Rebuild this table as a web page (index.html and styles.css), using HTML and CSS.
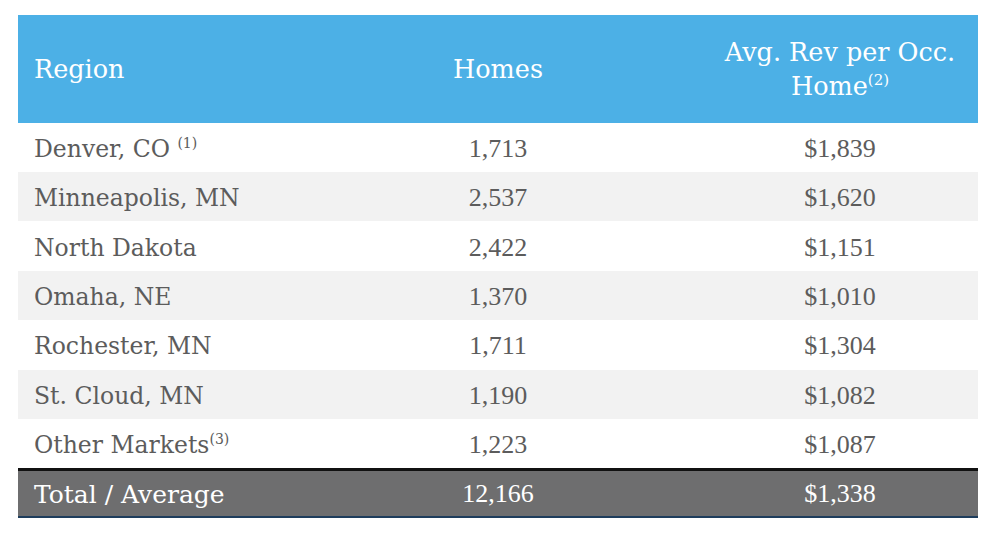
FILE: index.html
```html
<!DOCTYPE html>
<html>
<head>
<meta charset="utf-8">
<link rel="stylesheet" href="styles.css">
</head>
<body>
<div class="tbl">
  <div class="row head">
    <div class="c">Region</div>
    <div class="c ctr">Homes</div>
    <div class="c ctr">Avg. Rev per Occ.<br>Home<sup>(2)</sup></div>
  </div>
  <div class="row">
    <div class="c">Denver, CO <sup>(1)</sup></div>
    <div class="c num">1,713</div>
    <div class="c num">$1,839</div>
  </div>
  <div class="row alt">
    <div class="c">Minneapolis, MN</div>
    <div class="c num">2,537</div>
    <div class="c num">$1,620</div>
  </div>
  <div class="row">
    <div class="c">North Dakota</div>
    <div class="c num">2,422</div>
    <div class="c num">$1,151</div>
  </div>
  <div class="row alt">
    <div class="c">Omaha, NE</div>
    <div class="c num">1,370</div>
    <div class="c num">$1,010</div>
  </div>
  <div class="row">
    <div class="c">Rochester, MN</div>
    <div class="c num">1,711</div>
    <div class="c num">$1,304</div>
  </div>
  <div class="row alt">
    <div class="c">St. Cloud, MN</div>
    <div class="c num">1,190</div>
    <div class="c num">$1,082</div>
  </div>
  <div class="row">
    <div class="c">Other Markets<sup>(3)</sup></div>
    <div class="c num">1,223</div>
    <div class="c num">$1,087</div>
  </div>
  <div class="row total">
    <div class="c">Total / Average</div>
    <div class="c num">12,166</div>
    <div class="c num">$1,338</div>
  </div>
</div>
</body>
</html>
```

FILE: styles.css
```css
html, body {
  margin: 0;
  padding: 0;
  background: #ffffff;
}

.tbl {
  width: 960px;
  margin: 15px 0 0 18px;
  font-family: "DejaVu Serif", "Liberation Serif", serif;
  font-size: 23.5px;
}

.row {
  display: grid;
  grid-template-columns: 276px 408px 276px;
  align-items: center;
  height: 49.4px;
  color: #5c5c5c;
  box-sizing: border-box;
}

.c {
  padding: 3px 16px 0;
  white-space: nowrap;
}

.ctr {
  text-align: center;
}

.num {
  text-align: center;
  font-family: "Liberation Serif", "DejaVu Serif", serif;
  font-size: 26px;
}

.head {
  height: 107.7px;
  background: #4cb0e6;
  color: #ffffff;
  font-size: 25.5px;
  line-height: 34px;
}

.head .c {
  padding-top: 0;
}

.alt {
  background: #f2f2f2;
}

.total {
  background: #6e6e6f;
  color: #ffffff;
  font-size: 25px;
  border-top: 3px solid #111111;
  border-bottom: 2px solid #1e3d5c;
}

.total .c {
  padding-top: 1px;
}

.total .num {
  font-size: 26px;
}

sup {
  font-size: 14px;
  line-height: 0;
  vertical-align: 9px;
}

.head sup {
  font-size: 15px;
  vertical-align: 10px;
}
```
